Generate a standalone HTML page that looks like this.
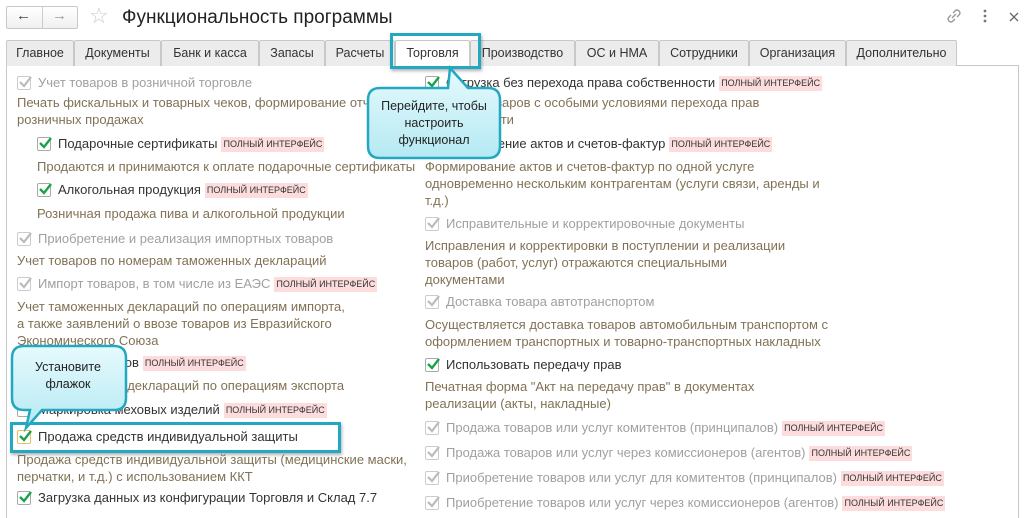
<!DOCTYPE html>
<html><head><meta charset="utf-8"><style>
*{margin:0;padding:0;box-sizing:border-box}
html{width:1024px;height:518px;overflow:hidden}
body{width:1024px;height:518px;overflow:hidden;background:#fff;font-family:"Liberation Sans",sans-serif;font-size:13px;color:#333;position:relative}
.a{position:absolute;white-space:nowrap;line-height:16px}
.tab{position:absolute;top:40px;height:26px;border:1px solid #c8c8c8;border-bottom:none;background:#ececec;line-height:24px;text-align:center;font-size:12.5px;color:#333;border-radius:2px 2px 0 0}
.cb{position:absolute;width:14px;height:14px;border:1px solid #aaa;background:#fff;border-radius:2px}
.cb.g{border-color:#ccc}
.cb svg{position:absolute;left:0;top:-2px}
.d{color:#807255}
.g2{color:#a0a0a0}
.b{display:inline-block;background:#fcdcdc;color:#333;font-size:9px;padding:0 2px;line-height:15px;vertical-align:1px;margin-left:4px}
</style></head><body>
<div style="position:absolute;left:6px;top:6px;width:72px;height:23px;border:1px solid #c8c8c8;border-radius:2px;background:linear-gradient(#fff,#f0f0f0)"></div>
<div style="position:absolute;left:42px;top:7px;width:1px;height:21px;background:#ccc"></div>
<div class="a" style="left:16px;top:8px;font-size:15px;color:#444">&#8592;</div>
<div class="a" style="left:52px;top:8px;font-size:15px;color:#999">&#8594;</div>
<div class="a" style="left:89px;top:4px;font-size:22px;color:#ccc;line-height:24px">&#9734;</div>
<div class="a" style="left:122px;top:6px;font-size:19px;color:#222;line-height:24px">Функциональность программы</div>
<svg style="position:absolute;left:946px;top:8px" width="16" height="16"><g stroke="#999" stroke-width="1.4" fill="none"><path d="M7 5 L9 3 Q11 1 13 3 Q15 5 13 7 L11 9"/><path d="M9 11 L7 13 Q5 15 3 13 Q1 11 3 9 L5 7"/><path d="M6 10 L10 6"/></g></svg>
<svg style="position:absolute;left:982px;top:8px" width="6" height="16"><g fill="#777"><circle cx="3" cy="3" r="1.4"/><circle cx="3" cy="8" r="1.4"/><circle cx="3" cy="13" r="1.4"/></g></svg>
<svg style="position:absolute;left:1009px;top:12px" width="10" height="10"><path d="M1 1 L9 9 M9 1 L1 9" stroke="#666" stroke-width="1.3"/></svg>

<div style="position:absolute;left:6px;top:65px;width:1013px;height:453px;border:1px solid #c8c8c8;border-bottom:none;background:#fff"></div>
<div class="tab" style="left:6px;width:68px">Главное</div>
<div class="tab" style="left:74px;width:87px">Документы</div>
<div class="tab" style="left:161px;width:98px">Банк и касса</div>
<div class="tab" style="left:259px;width:66px">Запасы</div>
<div class="tab" style="left:325px;width:70px">Расчеты</div>
<div class="tab" style="left:395px;width:75px;background:#fff;height:27px;z-index:2">Торговля</div>
<div class="tab" style="left:470px;width:105px">Производство</div>
<div class="tab" style="left:575px;width:84px">ОС и НМА</div>
<div class="tab" style="left:659px;width:90px">Сотрудники</div>
<div class="tab" style="left:749px;width:97px">Организация</div>
<div class="tab" style="left:846px;width:111px">Дополнительно</div>

<!-- left column -->
<div class="cb g" style="left:17px;top:76px"><svg width="14" height="14"><path d="M2 7 L6 11 L13 2" stroke="#bbb" stroke-width="2.2" fill="none"/></svg></div>
<div class="a g2" style="left:38px;top:75px">Учет товаров в розничной торговле</div>
<div class="a d" style="left:17px;top:95px">Печать фискальных и товарных чеков, формирование отчетов о</div>
<div class="a d" style="left:17px;top:112px">розничных продажах</div>
<div class="cb" style="left:37px;top:137px"><svg width="14" height="14"><path d="M2 7 L6 11 L13 2" stroke="#1aa24a" stroke-width="2.4" fill="none"/></svg></div>
<div class="a" style="left:58px;top:136px">Подарочные сертификаты<span class="b">ПОЛНЫЙ ИНТЕРФЕЙС</span></div>
<div class="a d" style="left:37px;top:159px">Продаются и принимаются к оплате подарочные сертификаты</div>
<div class="cb" style="left:37px;top:183px"><svg width="14" height="14"><path d="M2 7 L6 11 L13 2" stroke="#1aa24a" stroke-width="2.4" fill="none"/></svg></div>
<div class="a" style="left:58px;top:182px">Алкогольная продукция<span class="b">ПОЛНЫЙ ИНТЕРФЕЙС</span></div>
<div class="a d" style="left:37px;top:206px">Розничная продажа пива и алкогольной продукции</div>
<div class="cb g" style="left:17px;top:232px"><svg width="14" height="14"><path d="M2 7 L6 11 L13 2" stroke="#bbb" stroke-width="2.2" fill="none"/></svg></div>
<div class="a g2" style="left:38px;top:231px">Приобретение и реализация импортных товаров</div>
<div class="a d" style="left:17px;top:253px">Учет товаров по номерам таможенных деклараций</div>
<div class="cb g" style="left:17px;top:277px"><svg width="14" height="14"><path d="M2 7 L6 11 L13 2" stroke="#bbb" stroke-width="2.2" fill="none"/></svg></div>
<div class="a g2" style="left:38px;top:276px">Импорт товаров, в том числе из ЕАЭС<span class="b">ПОЛНЫЙ ИНТЕРФЕЙС</span></div>
<div class="a d" style="left:17px;top:299px">Учет таможенных деклараций по операциям импорта,</div>
<div class="a d" style="left:17px;top:316px">а также заявлений о ввозе товаров из Евразийского</div>
<div class="a d" style="left:17px;top:333px">Экономического Союза</div>
<div class="cb" style="left:17px;top:356px"></div>
<div class="a" style="left:38px;top:355px">Экспорт товаров<span class="b">ПОЛНЫЙ ИНТЕРФЕЙС</span></div>
<div class="a d" style="left:17px;top:378px">Учет таможенных деклараций по операциям экспорта</div>
<div class="cb" style="left:17px;top:403px"></div>
<div class="a" style="left:38px;top:402px">Маркировка меховых изделий<span class="b">ПОЛНЫЙ ИНТЕРФЕЙС</span></div>
<div class="cb" style="left:17px;top:430px;border-color:#e8c060"><svg width="14" height="14"><path d="M2 7 L6 11 L13 2" stroke="#1aa24a" stroke-width="2.4" fill="none"/></svg></div>
<div class="a" style="left:38px;top:429px">Продажа средств индивидуальной защиты</div>
<div style="position:absolute;left:10px;top:422px;width:331px;height:31px;border:3px solid #22a8c0;box-shadow:1px 2px 3px rgba(0,0,0,.3)"></div>
<div class="a d" style="left:17px;top:452px">Продажа средств индивидуальной защиты (медицинские маски,</div>
<div class="a d" style="left:17px;top:469px">перчатки, и т.д.) с использованием ККТ</div>
<div class="cb" style="left:17px;top:491px"><svg width="14" height="14"><path d="M2 7 L6 11 L13 2" stroke="#1aa24a" stroke-width="2.4" fill="none"/></svg></div>
<div class="a" style="left:38px;top:490px">Загрузка данных из конфигурации Торговля и Склад 7.7</div>

<!-- right column -->
<div class="cb" style="left:425px;top:76px"><svg width="14" height="14"><path d="M2 7 L6 11 L13 2" stroke="#1aa24a" stroke-width="2.4" fill="none"/></svg></div>
<div class="a" style="left:446px;top:75px">Отгрузка без перехода права собственности<span class="b">ПОЛНЫЙ ИНТЕРФЕЙС</span></div>
<div class="a d" style="left:425px;top:95px">Отгрузка товаров с особыми условиями перехода прав</div>
<div class="a d" style="left:425px;top:112px">собственности</div>
<div class="cb" style="left:425px;top:137px"><svg width="14" height="14"><path d="M2 7 L6 11 L13 2" stroke="#1aa24a" stroke-width="2.4" fill="none"/></svg></div>
<div class="a" style="left:446px;top:136px">Выставление актов и счетов-фактур<span class="b">ПОЛНЫЙ ИНТЕРФЕЙС</span></div>
<div class="a d" style="left:425px;top:159px">Формирование актов и счетов-фактур по одной услуге</div>
<div class="a d" style="left:425px;top:176px">одновременно нескольким контрагентам (услуги связи, аренды и</div>
<div class="a d" style="left:425px;top:193px">т.д.)</div>
<div class="cb g" style="left:425px;top:217px"><svg width="14" height="14"><path d="M2 7 L6 11 L13 2" stroke="#bbb" stroke-width="2.2" fill="none"/></svg></div>
<div class="a g2" style="left:446px;top:216px">Исправительные и корректировочные документы</div>
<div class="a d" style="left:425px;top:238px">Исправления и корректировки в поступлении и реализации</div>
<div class="a d" style="left:425px;top:255px">товаров (работ, услуг) отражаются специальными</div>
<div class="a d" style="left:425px;top:272px">документами</div>
<div class="cb g" style="left:425px;top:295px"><svg width="14" height="14"><path d="M2 7 L6 11 L13 2" stroke="#bbb" stroke-width="2.2" fill="none"/></svg></div>
<div class="a g2" style="left:446px;top:294px">Доставка товара автотранспортом</div>
<div class="a d" style="left:425px;top:317px">Осуществляется доставка товаров автомобильным транспортом с</div>
<div class="a d" style="left:425px;top:334px">оформлением транспортных и товарно-транспортных накладных</div>
<div class="cb" style="left:425px;top:358px"><svg width="14" height="14"><path d="M2 7 L6 11 L13 2" stroke="#1aa24a" stroke-width="2.4" fill="none"/></svg></div>
<div class="a" style="left:446px;top:357px">Использовать передачу прав</div>
<div class="a d" style="left:425px;top:379px">Печатная форма "Акт на передачу прав" в документах</div>
<div class="a d" style="left:425px;top:396px">реализации (акты, накладные)</div>
<div class="cb g" style="left:425px;top:421px"><svg width="14" height="14"><path d="M2 7 L6 11 L13 2" stroke="#bbb" stroke-width="2.2" fill="none"/></svg></div>
<div class="a g2" style="left:446px;top:420px">Продажа товаров или услуг комитентов (принципалов)<span class="b">ПОЛНЫЙ ИНТЕРФЕЙС</span></div>
<div class="cb g" style="left:425px;top:446px"><svg width="14" height="14"><path d="M2 7 L6 11 L13 2" stroke="#bbb" stroke-width="2.2" fill="none"/></svg></div>
<div class="a g2" style="left:446px;top:445px">Продажа товаров или услуг через комиссионеров (агентов)<span class="b">ПОЛНЫЙ ИНТЕРФЕЙС</span></div>
<div class="cb g" style="left:425px;top:471px"><svg width="14" height="14"><path d="M2 7 L6 11 L13 2" stroke="#bbb" stroke-width="2.2" fill="none"/></svg></div>
<div class="a g2" style="left:446px;top:470px">Приобретение товаров или услуг для комитентов (принципалов)<span class="b">ПОЛНЫЙ ИНТЕРФЕЙС</span></div>
<div class="cb g" style="left:425px;top:496px"><svg width="14" height="14"><path d="M2 7 L6 11 L13 2" stroke="#bbb" stroke-width="2.2" fill="none"/></svg></div>
<div class="a g2" style="left:446px;top:495px">Приобретение товаров или услуг через комиссионеров (агентов)<span class="b">ПОЛНЫЙ ИНТЕРФЕЙС</span></div>

<!-- tab highlight -->
<div style="position:absolute;left:390px;top:33px;width:91px;height:36px;border:3px solid #22a8c0;box-shadow:1px 2px 3px rgba(0,0,0,.3);z-index:3"></div>

<!-- callouts -->
<svg style="position:absolute;left:0;top:0;z-index:4" width="1024" height="518">
<defs><linearGradient id="gr" x1="0" y1="0" x2="0" y2="1"><stop offset="0" stop-color="#e6fafd"/><stop offset="1" stop-color="#b5e9f3"/></linearGradient></defs>
<path d="M380 88 H448 L450 68 L468 88 H488 Q500 88 500 100 V146 Q500 158 488 158 H380 Q368 158 368 146 V100 Q368 88 380 88 Z" fill="url(#gr)" stroke="#22a8c0" stroke-width="2.5"/>
<path d="M24 346 H114 Q126 346 126 358 V398 Q126 410 114 410 H42 L26 428 L30 410 H24 Q12 410 12 398 V358 Q12 346 24 346 Z" fill="url(#gr)" stroke="#22a8c0" stroke-width="2.5"/>
<g font-family="Liberation Sans, sans-serif" font-size="12.5" fill="#222" text-anchor="middle">
<text x="434" y="110">Перейдите, чтобы</text>
<text x="434" y="127">настроить</text>
<text x="434" y="144">функционал</text>
<text x="68" y="371">Установите</text>
<text x="68" y="388">флажок</text>
</g>
</svg>
</body></html>
